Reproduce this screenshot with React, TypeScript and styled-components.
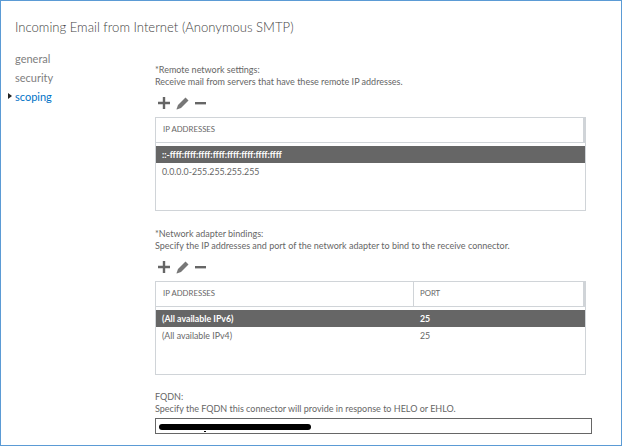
import styled, { createGlobalStyle } from 'styled-components';

const GlobalStyle = createGlobalStyle`
	html, body {
		margin: 0;
		padding: 0;
		background: #fff;
	}
	body {
		font-family: Lato, 'Open Sans', 'Liberation Sans', sans-serif;
		color: #666;
	}
`;

function Toolbar() {
	return (
		<Tools>
			<svg width="12" height="12" viewBox="0 0 12 12">
				<path d="M4.800 0h2.400v4.800H12v2.400H7.200V12H4.800V7.200H0V4.800h4.800z" fill="#666" />
			</svg>
			<svg width="13" height="13" viewBox="0 0 13 13">
				<path d="M9.500 0.500 12.500 3.500 5 11 0.800 12.500 0.500 12.200 2 8z" fill="#777" />
			</svg>
			<svg width="11" height="12" viewBox="0 0 11 12">
				<rect x="0" y="5" width="11" height="2.400" fill="#666" />
			</svg>
		</Tools>
	);
}

export default function App() {
	return (
		<>
			<GlobalStyle />
			<Frame>
				<Title>Incoming Email from Internet (Anonymous SMTP)</Title>
				<Body>
					<Nav>
						<NavItem>general</NavItem>
						<NavItem>security</NavItem>
						<NavItem $active>scoping</NavItem>
					</Nav>
					<Content>
						<Section $height={164}>
							<Label>*Remote network settings:</Label>
							<Label>Receive mail from servers that have these remote IP addresses.</Label>
							<Toolbar />
							<Table>
								<HeadRow>
									<HeadCell>IP ADDRESSES</HeadCell>
								</HeadRow>
								<Rows>
									<DataRow $selected>
										<DataCell>::-ffff:ffff:ffff:ffff:ffff:ffff:ffff:ffff</DataCell>
									</DataRow>
									<DataRow>
										<DataCell>0.0.0.0-255.255.255.255</DataCell>
									</DataRow>
								</Rows>
							</Table>
						</Section>
						<Section $height={163}>
							<Label>*Network adapter bindings:</Label>
							<Label>Specify the IP addresses and port of the network adapter to bind to the receive connector.</Label>
							<Toolbar />
							<Table>
								<HeadRow>
									<HeadCell>IP ADDRESSES</HeadCell>
									<PortHead>PORT</PortHead>
								</HeadRow>
								<Rows>
									<DataRow $selected>
										<DataCell>(All available IPv6)</DataCell>
										<PortCell>25</PortCell>
									</DataRow>
									<DataRow>
										<DataCell>(All available IPv4)</DataCell>
										<PortCell>25</PortCell>
									</DataRow>
								</Rows>
							</Table>
						</Section>
						<Section>
							<Label>FQDN:</Label>
							<Label>Specify the FQDN this connector will provide in response to HELO or EHLO.</Label>
							<Input>
								<Redaction />
							</Input>
						</Section>
					</Content>
				</Body>
			</Frame>
		</>
	);
}

const Frame = styled.div`
	box-sizing: border-box;
	width: 622px;
	height: 446px;
	border: 1px solid #5b9bd5;
	overflow: hidden;
`;

const Title = styled.div`
	font-size: 13.100px;
	font-weight: 300;
	line-height: 20px;
	color: #444;
	padding: 16px 0 0 14px;
`;

const Body = styled.div`
	display: flex;
	padding-top: 14px;
`;

const Nav = styled.div`
	width: 154px;
	flex: none;
	display: flex;
	flex-direction: column;
	gap: 4px;
	padding-left: 14px;
	box-sizing: border-box;
`;

const NavItem = styled.div<{ $active?: boolean }>`
	position: relative;
	font-size: 11px;
	line-height: 15px;
	color: ${p => (p.$active ? '#0072c6' : '#808080')};

	&::before {
		content: '';
		display: ${p => (p.$active ? 'block' : 'none')};
		position: absolute;
		left: -7px;
		top: 4px;
		border-left: 4px solid #222;
		border-top: 3px solid transparent;
		border-bottom: 3px solid transparent;
	}
`;

const Content = styled.div`
	display: flex;
	flex-direction: column;
	padding-top: 13px;
`;

const Section = styled.div<{ $height?: number }>`
	height: ${p => (p.$height ? `${p.$height}px` : 'auto')};
	box-sizing: border-box;
	flex: none;
`;

const Label = styled.div`
	font-size: 9px;
	line-height: 12px;
	color: #666;
	white-space: nowrap;
`;

const Tools = styled.div`
	display: flex;
	align-items: center;
	gap: 6px;
	height: 14px;
	margin: 8px 0 7px 3px;
`;

const Table = styled.div`
	box-sizing: border-box;
	width: 431px;
	height: 94px;
	border: 1px solid #d0d4d8;
`;

const HeadRow = styled.div`
	display: flex;
	height: 24px;
	border-right: 2px solid #d0d4d8;
	border-bottom: 1px solid #d0d4d8;
`;

const HeadCell = styled.div`
	flex: 0 0 257px;
	box-sizing: border-box;
	padding-left: 7px;
	font-size: 7.800px;
	line-height: 23px;
	color: #666;
`;

const PortHead = styled(HeadCell)`
	flex: 1;
	border-left: 1px solid #d0d4d8;
	padding-left: 6px;
`;

const Rows = styled.div`
	padding-top: 3px;
`;

const DataRow = styled.div<{ $selected?: boolean }>`
	display: flex;
	height: 17px;
	align-items: center;
	background: ${p => (p.$selected ? '#666' : 'transparent')};
	color: ${p => (p.$selected ? '#fff' : '#666')};
	font-weight: ${p => (p.$selected ? 700 : 400)};
`;

const DataCell = styled.div`
	flex: 0 0 257px;
	box-sizing: border-box;
	padding-left: 6px;
	font-size: 8.800px;
	white-space: nowrap;
`;

const PortCell = styled(DataCell)`
	flex: 1;
	padding-left: 7px;
`;

const Input = styled.div`
	box-sizing: border-box;
	width: 437px;
	height: 16px;
	margin-top: 3px;
	border: 1px solid #666;
	display: flex;
	align-items: center;
	padding-left: 3px;
`;

const Redaction = styled.div`
	position: relative;
	width: 152px;
	height: 6px;
	margin-top: 1px;
	border-radius: 3px;
	background: #000;

	&::after {
		content: '';
		position: absolute;
		left: 45px;
		top: 7px;
		width: 2px;
		height: 1px;
		background: #000;
	}
`;
